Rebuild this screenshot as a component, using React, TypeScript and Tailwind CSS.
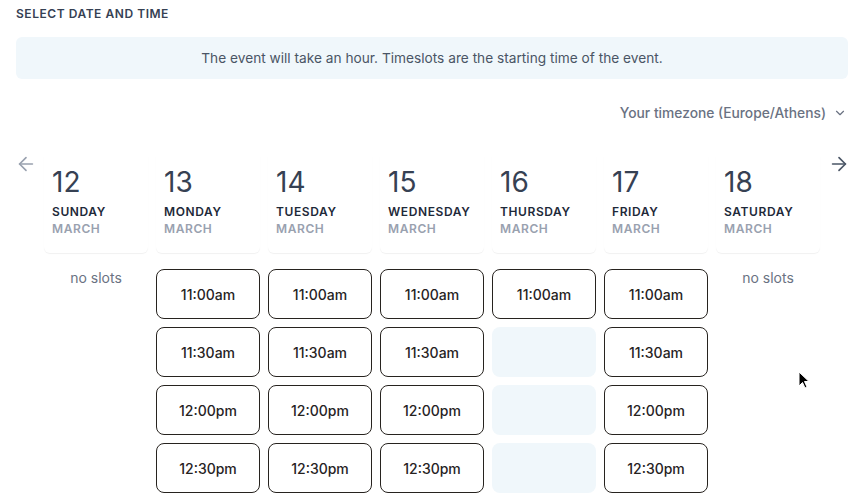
import { ArrowLeft, ArrowRight, ChevronDown } from 'lucide-react'

type Day = { date: number; name: string; slots: (string | null)[] }

const days: Day[] = [
  { date: 12, name: 'Sunday', slots: [] },
  { date: 13, name: 'Monday', slots: ['11:00am', '11:30am', '12:00pm', '12:30pm'] },
  { date: 14, name: 'Tuesday', slots: ['11:00am', '11:30am', '12:00pm', '12:30pm'] },
  { date: 15, name: 'Wednesday', slots: ['11:00am', '11:30am', '12:00pm', '12:30pm'] },
  { date: 16, name: 'Thursday', slots: ['11:00am', null, null, null] },
  { date: 17, name: 'Friday', slots: ['11:00am', '11:30am', '12:00pm', '12:30pm'] },
  { date: 18, name: 'Saturday', slots: [] },
]

export default function App() {
  return (
    <div className="relative h-[500px] w-[862px] overflow-hidden bg-white font-['Inter','Liberation_Sans',sans-serif]">
      <div className="pt-[6px] pr-[14px] pl-4">
        <h2 className="text-[12px] font-semibold uppercase leading-[16px] tracking-[0.045em] text-gray-700">
          Select date and time
        </h2>

        <div className="mt-[15px] flex h-[42px] items-center justify-center rounded-md bg-[#f0f7fb] text-[13.7px] text-gray-600">
          The event will take an hour. Timeslots are the starting time of the event.
        </div>

        <div className="mt-[24px] flex h-[20px] items-center justify-end gap-[7px] pr-[1px] text-[13.8px] font-medium text-gray-500">
          <span>Your timezone (Europe/Athens)</span>
          <ChevronDown className="size-[14px]" strokeWidth={2} />
        </div>

        <div className="mt-[33px] flex">
          <div className="w-[28px] shrink-0">
            <ArrowLeft className="-mt-[3px] -ml-px size-[22px] text-gray-400" strokeWidth={1.8} />
          </div>

          <div className="grid w-[776px] grid-cols-7 gap-x-[8px]">
            {days.map((day) => (
              <div key={day.date} className="flex flex-col">
                <div className="rounded-b-md px-2 pt-[10px] pb-[16px] shadow-[0_1px_1px_rgba(0,0,0,0.06)]">
                  <div className="text-[28px] leading-[32px] text-gray-700">{day.date}</div>
                  <div className="mt-[6px] text-[12px] font-semibold uppercase leading-[16px] tracking-[0.05em] text-gray-800">
                    {day.name}
                  </div>
                  <div className="text-[12px] font-semibold uppercase leading-[17px] tracking-[0.05em] text-gray-400">
                    March
                  </div>
                </div>

                <div className="mt-[16px] flex flex-col gap-[8px]">
                  {day.slots.length === 0 ? (
                    <div className="pt-[1px] text-center text-[14px] leading-[16px] text-gray-500">no slots</div>
                  ) : (
                    day.slots.map((slot, i) =>
                      slot ? (
                        <button
                          key={i}
                          className="h-[50px] w-full rounded-lg border border-[#27231f] text-[14px] font-medium text-[#27231f]"
                        >
                          {slot}
                        </button>
                      ) : (
                        <div key={i} className="h-[50px] w-full rounded-lg bg-[#f0f7fb]" />
                      ),
                    )
                  )}
                </div>
              </div>
            ))}
          </div>

          <div className="flex w-[28px] shrink-0 justify-end">
            <ArrowRight className="-mt-[3px] -mr-[2px] size-[22px] text-gray-600" strokeWidth={1.8} />
          </div>
        </div>
      </div>

      <svg className="absolute left-[798px] top-[371px]" width="13" height="19" viewBox="0 0 13 19">
        <path d="M1 1 L1 15 L4.5 11.5 L7 17 L9 16 L6.5 10.5 L11 10.5 Z" fill="#000" stroke="#fff" strokeWidth="1" />
      </svg>
    </div>
  )
}
